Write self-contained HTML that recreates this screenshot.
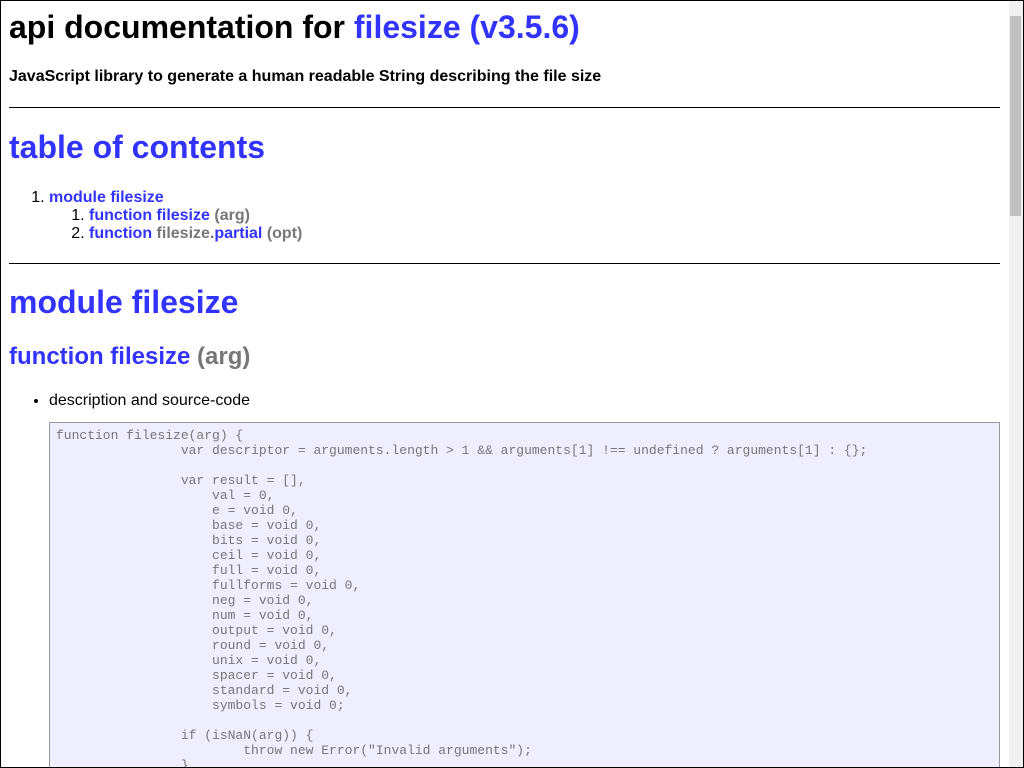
<!DOCTYPE html>
<html><head><meta charset="utf-8"><style>
html,body{margin:0;padding:0;height:768px;overflow:hidden}
#fr{position:fixed;left:0;top:0;width:1024px;height:768px;box-sizing:border-box;border:1px solid #000;pointer-events:none;z-index:5}
#wrap{padding:9px 0 0 9px;width:991px;height:758px;overflow:hidden;font-family:"Liberation Sans",sans-serif;font-size:16px;line-height:18px;color:#000;}
a{color:#33f;text-decoration:none;font-weight:bold}
.g{color:#777;font-weight:bold}
h1{font-size:32px;line-height:37px;margin:0;font-weight:bold}
h2{font-size:24px;line-height:28px;margin:22px 0 0;font-weight:bold}
h4{font-size:16px;line-height:18px;margin:22px 0 0;font-weight:bold}
hr{border:0;border-top:1px solid #000;height:0;margin:21px 0 0}
ol,ul{margin:0;padding-left:40px}
ol ol{margin:0}
pre{margin:12px 0 0;background:#eef;border:1px solid #999;padding:5px 6px;font-family:"Liberation Mono",monospace;font-size:13px;line-height:15px;color:#777;tab-size:8;white-space:pre;overflow:hidden;height:360px}
#sb{position:fixed;right:1px;top:1px;width:14px;height:766px;background:#f1f1f1;z-index:4}
#th{position:absolute;left:1px;top:15px;width:11px;height:200px;background:#c1c1c1}
</style></head><body>
<div id="fr"></div>
<div id="sb"><div id="th"></div></div>
<div id="wrap">
<h1>api documentation for <a>filesize (v3.5.6)</a></h1>
<h4>JavaScript library to generate a human readable String describing the file size</h4>
<hr>
<h1 style="margin-top:21px"><a>table of contents</a></h1>
<ol style="margin-top:23px">
<li><a>module filesize</a>
<ol>
<li><a>function filesize</a> <span class="g">(arg)</span></li>
<li><a>function</a> <span class="g">filesize.</span><a>partial</a> <span class="g">(opt)</span></li>
</ol></li>
</ol>
<hr style="margin-top:20px">
<h1 style="margin-top:20px"><a>module filesize</a></h1>
<h2><a>function filesize</a> <span class="g">(arg)</span></h2>
<ul style="margin-top:21px"><li>description and source-code
<pre>function filesize(arg) {
		var descriptor = arguments.length &gt; 1 &amp;&amp; arguments[1] !== undefined ? arguments[1] : {};

		var result = [],
		    val = 0,
		    e = void 0,
		    base = void 0,
		    bits = void 0,
		    ceil = void 0,
		    full = void 0,
		    fullforms = void 0,
		    neg = void 0,
		    num = void 0,
		    output = void 0,
		    round = void 0,
		    unix = void 0,
		    spacer = void 0,
		    standard = void 0,
		    symbols = void 0;

		if (isNaN(arg)) {
			throw new Error("Invalid arguments");
		}

		bits = descriptor.bits === true;
</pre></li></ul>
</div>
</body></html>
